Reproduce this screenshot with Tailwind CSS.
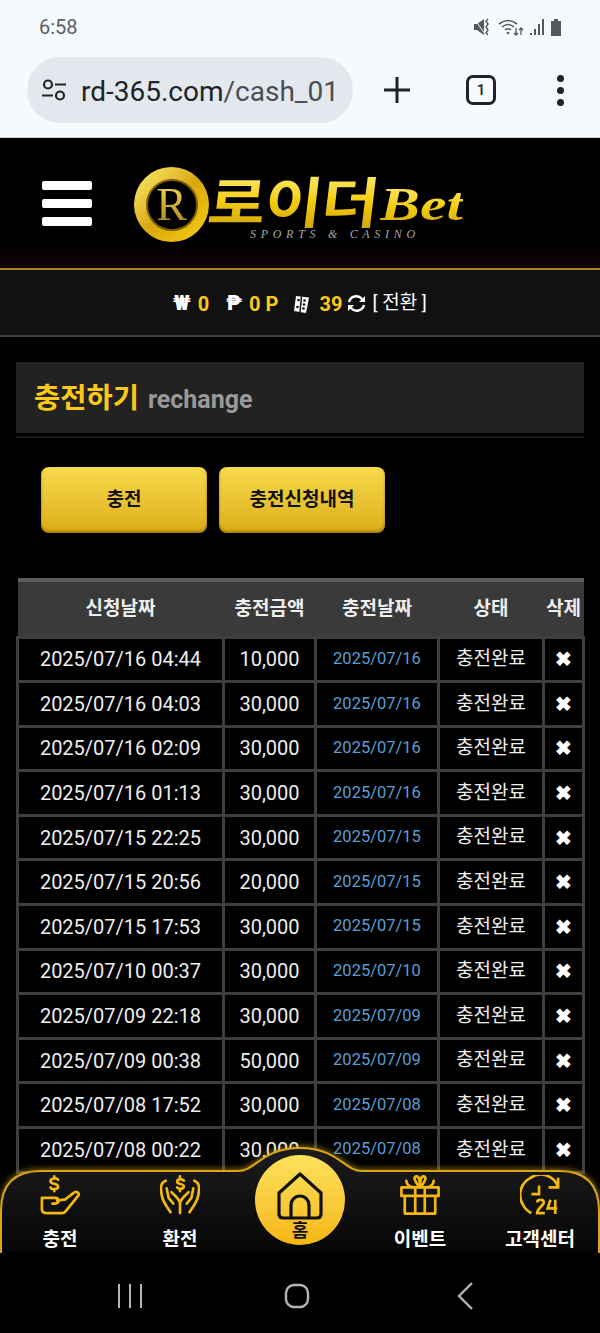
<!doctype html>
<html lang="en">
    <head>
        <meta charset="UTF-8" />
        <meta name="viewport" content="width=device-width, initial-scale=1.0" />
        <title>rechange</title>
        <script src="https://cdn.jsdelivr.net/npm/@tailwindcss/browser@4"></script>
    </head>

    <body class="bg-black font-['Roboto','Noto_Sans_CJK_KR',sans-serif]">
        <div class="relative w-[600px] h-[1333px] overflow-hidden bg-black">
            <!-- Browser chrome -->
            <div class="h-[138px] bg-[#f6f9fe] border-b border-[#cfd2d6]">
                <div class="flex items-center justify-between h-[54px] pl-[39px] pr-[37px]">
                    <span class="text-[20px] text-[#5c5f63]">6:58</span>
                    <svg width="90" height="22" viewBox="4 0 90 22" fill="#55585c">
                        <path d="M5 8h3l7-5v16l-7-5H5z" />
                        <path d="M6 4l10 14" stroke="#f6f9fe" stroke-width="1" />
                        <path d="M19 3l-2 2 2 3-2 3 2 3-2 3 2 2" fill="none" stroke="#55585c" stroke-width="1.400" />
                        <path d="M30 8q9-7 18 0M33 11q6-5 12 0M36 14q3-2.500 6 0" fill="none" stroke="#55585c" stroke-width="1.600" />
                        <circle cx="39" cy="17" r="1.300" />
                        <path d="M47 12v7M45 17l2 2 2-2M52 19v-7M50 14l2-2 2 2" fill="none" stroke="#55585c" stroke-width="1.300" />
                        <path d="M61 17h2v2h-2zM65 13h2v6h-2zM69 8h2v11h-2zM73 3h2v16h-2z" />
                        <path d="M82 5h3V3h4v2h3v15H82z" />
                    </svg>
                </div>
                <div class="flex items-center h-[66px] mt-[3px] pl-[27px]">
                    <div class="flex items-center w-[326px] h-[66px] rounded-full bg-[#e3e8ef] pl-[14px] overflow-hidden">
                        <svg width="26" height="24" viewBox="0 0 26 24" fill="none" stroke="#202327" stroke-width="2.200">
                            <circle cx="7" cy="6.500" r="4" />
                            <path d="M14 6.500h11M1 17.500h11" />
                            <circle cx="19" cy="17.500" r="4" />
                        </svg>
                        <span class="ml-[14px] mt-[3px] text-[28px] whitespace-nowrap text-[#202327]">rd-365.com<span class="text-[#4a4e53]">/cash_01</span></span>
                    </div>
                    <svg class="ml-[30px]" width="28" height="28" viewBox="0 0 28 28" stroke="#202327" stroke-width="3">
                        <path d="M1 14h26M14 1v26" />
                    </svg>
                    <div class="ml-[55px] flex items-center justify-center w-[30px] h-[30px] rounded-[7px] border-[3px] border-[#202327] text-[15px] font-medium text-[#202327]">1</div>
                    <div class="ml-[61px] flex flex-col gap-[5px]">
                        <span class="size-[7px] rounded-full bg-[#202327]"></span>
                        <span class="size-[7px] rounded-full bg-[#202327]"></span>
                        <span class="size-[7px] rounded-full bg-[#202327]"></span>
                    </div>
                </div>
            </div>

            <!-- Header -->
            <div class="flex items-start h-[132px] border-b-2 border-[#a8822c] bg-linear-to-b from-black from-60% to-[#120305]">
                <div class="ml-[42px] mt-[43px] flex flex-col gap-[9px]">
                    <span class="block w-[50px] h-[9px] rounded-[2px] bg-white"></span>
                    <span class="block w-[50px] h-[9px] rounded-[2px] bg-white"></span>
                    <span class="block w-[50px] h-[9px] rounded-[2px] bg-white"></span>
                </div>
                <!-- Logo -->
                <div class="relative ml-[42px] mt-[29px] w-[340px] h-[76px]">
                    <div class="absolute left-0 top-0 flex items-center justify-center size-[75px] rounded-full bg-linear-to-br from-[#fff06a] via-[#d9a80c] to-[#f6cf16]">
                        <div class="flex items-center justify-center size-[52px] rounded-full bg-black border-2 border-[#7a5c06]">
                            <span class="font-['Liberation_Serif',serif] text-[46px] leading-none text-transparent bg-clip-text bg-linear-to-b from-[#f6dc55] to-[#a8800f]">R</span>
                        </div>
                    </div>
                    <span class="absolute left-[75px] top-[-6px] origin-left scale-x-[1.14] -skew-x-6 text-[55px] leading-[76px] font-bold tracking-[-1px] whitespace-nowrap text-transparent bg-clip-text bg-linear-to-b from-[#fff37a] via-[#f5d012] to-[#c89a08] font-['Noto_Sans_CJK_KR',sans-serif]">로이더</span>
                    <span class="absolute left-[246px] top-[8px] origin-left scale-x-[1.3] text-[46px] leading-[60px] font-bold italic text-transparent bg-clip-text bg-linear-to-b from-[#fff37a] via-[#f5d012] to-[#c89a08] font-['Liberation_Serif',serif]">Bet</span>
                    <span class="absolute left-[116px] top-[60px] text-[12px] leading-[14px] italic tracking-[4.700px] whitespace-nowrap text-[#a5a5a5] font-['Liberation_Serif',serif]">SPORTS &amp; CASINO</span>
                </div>
            </div>

            <!-- Balance bar -->
            <div class="flex items-center h-[67px] pt-[2px] pl-[173px] bg-[#111111] border-b-2 border-[#3f3f3f] text-[20px] font-bold">
                <span class="text-[21px] font-black text-white">₩</span>
                <span class="ml-[7px] text-[#fcc917]">0</span>
                <span class="ml-[17px] text-[21px] font-black text-white">₱</span>
                <span class="ml-[7px] tracking-[2px] text-[#fcc917] whitespace-nowrap">0<span class="ml-[3px]">P</span></span>
                <svg class="ml-[12px]" width="19" height="20" viewBox="0 0 19 20">
                    <path d="M4 2l13 1.500-3 15.500-12-2z" fill="#fff" />
                    <path d="M9.500 2.500L8 18" stroke="#111" stroke-width="1.500" />
                    <circle cx="6.500" cy="6" r="1.300" fill="#111" />
                    <circle cx="5.500" cy="13" r="1.300" fill="#111" />
                    <circle cx="12.500" cy="6.500" r="1.300" fill="#111" />
                    <circle cx="12" cy="10.500" r="1.300" fill="#111" />
                    <circle cx="11.500" cy="14.500" r="1.300" fill="#111" />
                </svg>
                <span class="ml-[8px] text-[#fcc917]">39</span>
                <svg class="ml-[5px]" width="19" height="19" viewBox="0 0 19 19" fill="none" stroke="#fff" stroke-width="2.400">
                    <path d="M2 8a7.500 7.500 0 0 1 13-3l2 2M17 11a7.500 7.500 0 0 1-13 3l-2-2" />
                    <path d="M18 2v6h-6zM1 17v-6h6z" fill="#fff" stroke="none" />
                </svg>
                <span class="ml-[6px] text-[19px] font-normal text-white whitespace-pre">[ 전환 ]</span>
            </div>

            <!-- Page title -->
            <div class="mx-4 mt-[25px] h-[71px] flex items-center pl-[18px] pt-[4px] bg-[#222222]">
                <span class="text-[28.500px] font-bold text-[#fcc917]">충전하기</span>
                <span class="ml-[9px] text-[25px] font-bold text-[#999999]">rechange</span>
            </div>
            <div class="mx-4 mt-[3px] h-[2px] bg-[#1a1a1a]"></div>

            <!-- Tabs -->
            <div class="flex gap-3 mt-[29px] ml-[41px]">
                <button class="w-[166px] h-[66px] rounded-[8px] bg-linear-to-b from-[#f7da4a] to-[#dcae14] shadow-[inset_0_-2px_3px_rgba(120,80,0,0.6)] text-[19px] font-bold text-[#111111]">충전</button>
                <button class="w-[166px] h-[66px] rounded-[8px] bg-linear-to-b from-[#f7da4a] to-[#dcae14] shadow-[inset_0_-2px_3px_rgba(120,80,0,0.6)] text-[19px] font-bold text-[#111111]">충전신청내역</button>
            </div>

            <!-- History table -->
            <table class="ml-4 mt-[45px] w-[566px] table-fixed border-collapse text-center text-[#eeeeee] text-[20px]">
                <colgroup>
                    <col class="w-[206px]" />
                    <col class="w-[92px]" />
                    <col class="w-[123px]" />
                    <col class="w-[105px]" />
                    <col class="w-[40px]" />
                </colgroup>
                <thead>
                    <tr class="h-[57px] bg-[#3a3a3a] border-t-[4px] border-[#5c5c5c] text-[19px] font-bold">
                        <th>신청날짜</th>
                        <th>충전금액</th>
                        <th>충전날짜</th>
                        <th>상태</th>
                        <th>삭제</th>
                    </tr>
                </thead>
                <tbody class="[&_td]:h-[44.600px] [&_td]:border-[3px] [&_td]:border-[#3f3f3f] [&_td]:p-0">
                    <tr><td>2025/07/16 04:44</td><td>10,000</td><td class="text-[16.500px] text-[#5a9fd4]">2025/07/16</td><td class="text-[19px]">충전완료</td><td class="text-[20px] font-bold text-white">✖</td></tr>
                    <tr><td>2025/07/16 04:03</td><td>30,000</td><td class="text-[16.500px] text-[#5a9fd4]">2025/07/16</td><td class="text-[19px]">충전완료</td><td class="text-[20px] font-bold text-white">✖</td></tr>
                    <tr><td>2025/07/16 02:09</td><td>30,000</td><td class="text-[16.500px] text-[#5a9fd4]">2025/07/16</td><td class="text-[19px]">충전완료</td><td class="text-[20px] font-bold text-white">✖</td></tr>
                    <tr><td>2025/07/16 01:13</td><td>30,000</td><td class="text-[16.500px] text-[#5a9fd4]">2025/07/16</td><td class="text-[19px]">충전완료</td><td class="text-[20px] font-bold text-white">✖</td></tr>
                    <tr><td>2025/07/15 22:25</td><td>30,000</td><td class="text-[16.500px] text-[#5a9fd4]">2025/07/15</td><td class="text-[19px]">충전완료</td><td class="text-[20px] font-bold text-white">✖</td></tr>
                    <tr><td>2025/07/15 20:56</td><td>20,000</td><td class="text-[16.500px] text-[#5a9fd4]">2025/07/15</td><td class="text-[19px]">충전완료</td><td class="text-[20px] font-bold text-white">✖</td></tr>
                    <tr><td>2025/07/15 17:53</td><td>30,000</td><td class="text-[16.500px] text-[#5a9fd4]">2025/07/15</td><td class="text-[19px]">충전완료</td><td class="text-[20px] font-bold text-white">✖</td></tr>
                    <tr><td>2025/07/10 00:37</td><td>30,000</td><td class="text-[16.500px] text-[#5a9fd4]">2025/07/10</td><td class="text-[19px]">충전완료</td><td class="text-[20px] font-bold text-white">✖</td></tr>
                    <tr><td>2025/07/09 22:18</td><td>30,000</td><td class="text-[16.500px] text-[#5a9fd4]">2025/07/09</td><td class="text-[19px]">충전완료</td><td class="text-[20px] font-bold text-white">✖</td></tr>
                    <tr><td>2025/07/09 00:38</td><td>50,000</td><td class="text-[16.500px] text-[#5a9fd4]">2025/07/09</td><td class="text-[19px]">충전완료</td><td class="text-[20px] font-bold text-white">✖</td></tr>
                    <tr><td>2025/07/08 17:52</td><td>30,000</td><td class="text-[16.500px] text-[#5a9fd4]">2025/07/08</td><td class="text-[19px]">충전완료</td><td class="text-[20px] font-bold text-white">✖</td></tr>
                    <tr><td>2025/07/08 00:22</td><td>30,000</td><td class="text-[16.500px] text-[#5a9fd4]">2025/07/08</td><td class="text-[19px]">충전완료</td><td class="text-[20px] font-bold text-white">✖</td></tr>
                </tbody>
            </table>

            <!-- Bottom nav -->
            <svg class="absolute left-0 top-[1147px] overflow-visible drop-shadow-[0_-1px_3px_rgba(240,190,20,0.55)]" width="600" height="106" viewBox="0 0 600 106">
                <defs>
                    <linearGradient id="navFill" x1="0" y1="0" x2="0" y2="1">
                        <stop offset="0" stop-color="#1c1c1c" />
                        <stop offset="1" stop-color="#050505" />
                    </linearGradient>
                </defs>
                <path d="M1 112V64Q1 24 41 24H238C256 24 262 1 300 1C338 1 344 24 362 24H559Q599 24 599 64V112Z" fill="url(#navFill)" stroke="#d9a514" stroke-width="2" />
            </svg>
            <div class="absolute left-0 bottom-0 w-[600px] h-[80px] bg-black"></div>

            <div class="absolute left-0 top-[1175px] w-[600px] grid grid-cols-5 text-white text-[19px] font-bold text-center">
                <div class="flex flex-col items-center">
                    <svg width="40" height="40" viewBox="0 0 42 42" fill="none" stroke="#f4b80f" stroke-width="2.800" stroke-linecap="round" stroke-linejoin="round">
                        <path d="M19 5c-1-2-8-2-8 1.500s8 2 8 5.500-7 3.500-8 1M15 1.500v2M15 15v2" />
                        <path d="M2 24h14c4 0 5 6 0 6h-3M2 24v12c0 3 1 4 4 4h17c2 0 3-1 4-2l13-16c2-3-2-6-5-3l-9 7c-3-1-4 1-8 1" />
                    </svg>
                    <span class="mt-[13px] leading-[24px]">충전</span>
                </div>
                <div class="flex flex-col items-center">
                    <svg width="40" height="40" viewBox="0 0 42 42" fill="none" stroke="#f4b80f" stroke-width="2.800" stroke-linecap="round" stroke-linejoin="round">
                        <path d="M25 6c-1-2-7-2-7 1s7 2 7 5-6 3-7 1M21 1.500v2M21 15v2" />
                        <path d="M6 6C1 8 0 12 2 22c1 6 5 11 9 17M36 6c5 2 6 6 4 16-1 6-5 11-9 17" />
                        <path d="M7 14l2 10 5 6M35 14l-2 10-5 6M21 40V30c0-4-5-8-9-12M21 30c0-4 5-8 9-12" />
                    </svg>
                    <span class="mt-[13px] leading-[24px]">환전</span>
                </div>
                <div></div>
                <div class="flex flex-col items-center">
                    <svg width="40" height="40" viewBox="0 0 42 42" fill="none" stroke="#f4b80f" stroke-width="2.800" stroke-linejoin="round">
                        <path d="M1.500 13h39v9h-39zM5 22v18.500h32V22M16 13v27.500M26 13v27.500" />
                        <path d="M21 13C17 9 13 2 17 1.500S21 9 21 13C21 9 21 1 25 1.500S25 9 21 13M14 13C8 12 6 8 7 5M28 13c6-1 8-5 7-8" />
                    </svg>
                    <span class="mt-[13px] leading-[24px]">이벤트</span>
                </div>
                <div class="flex flex-col items-center">
                    <svg width="40" height="40" viewBox="0 0 42 42" fill="none" stroke="#f4b80f" stroke-width="2.800">
                        <path d="M40 13A19 19 0 0 0 11 3 20 20 0 0 0 3 31a19 19 0 0 0 9 9" />
                        <path d="M40 3v10H30M20 11v9h-8" />
                        <path d="M18 29c0-4 7-4 7 0 0 3-7 6-7 11h8M32 26l-3 9h10M37 26v15" />
                    </svg>
                    <span class="mt-[13px] leading-[24px] whitespace-nowrap">고객센터</span>
                </div>
            </div>

            <!-- Home button -->
            <div class="absolute left-[255px] top-[1155px] flex flex-col items-center size-[90px] rounded-full bg-linear-to-b from-[#fde15a] to-[#f5b70b]">
                <svg class="mt-[17px]" width="50" height="48" viewBox="0 0 50 48" fill="none" stroke="#111" stroke-width="3.200" stroke-linejoin="round">
                    <path d="M4 21L25 2l21 19v21q0 4-4 4H8q-4 0-4-4z" />
                    <path d="M16 46V33a9 9 0 0 1 18 0v13" />
                </svg>
                <span class="mt-[1px] text-[18px] leading-[20px] font-bold text-[#111]">홈</span>
            </div>

            <!-- System nav -->
            <div class="absolute left-0 bottom-0 w-[600px] h-[80px]">
                <svg class="absolute left-[117px] top-[30px]" width="26" height="26" viewBox="0 0 26 26" stroke="#b5b5b5" stroke-width="2">
                    <path d="M2 1v24M13 1v24M24 1v24" />
                </svg>
                <svg class="absolute left-[284px] top-[30px]" width="26" height="26" viewBox="0 0 26 26" fill="none" stroke="#b5b5b5" stroke-width="2.400">
                    <rect x="2" y="2" width="22" height="22" rx="8" />
                </svg>
                <svg class="absolute left-[456px] top-[29px]" width="20" height="28" viewBox="0 0 20 28" fill="none" stroke="#b5b5b5" stroke-width="2.400">
                    <path d="M16 1L3 14l13 13" />
                </svg>
            </div>
        </div>
    </body>
</html>
